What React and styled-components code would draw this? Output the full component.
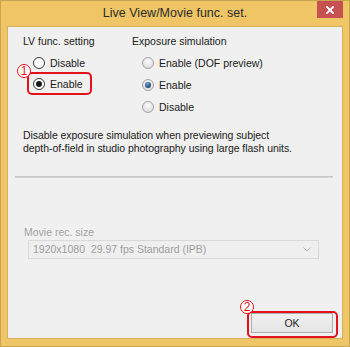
import React from 'react'
import styled, { createGlobalStyle } from 'styled-components'

const RED = '#e3131d';

const GlobalStyle = createGlobalStyle`
  html, body {
    margin: 0;
    padding: 0;
    background: #fff;
  }
  body {
    font-family: "Liberation Sans", Arial, sans-serif;
  }
  * {
    box-sizing: border-box;
  }
`;

export default function App() {
  return (
    <>
      <GlobalStyle />
      <Window>
        <TitleBar>
          <span />
          <Title>Live View/Movie func. set.</Title>
          <CloseButton>
            <svg width="8" height="8" viewBox="0 0 8 8">
              <path d="M1 1L7 7M7 1L1 7" stroke="#fff" strokeWidth="1.8" strokeLinecap="square" />
            </svg>
          </CloseButton>
        </TitleBar>

        <Client>
          <Settings>
            <Group $width={109}>
              <GroupLabel>LV func. setting</GroupLabel>
              <RadioList>
                <RadioRow>
                  <RadioDot $flat />
                  <RadioText>Disable</RadioText>
                </RadioRow>
                <RadioRow $shift={-1}>
                  <RadioDot $flat $checked />
                  <RadioText>Enable</RadioText>
                  <Highlight $l={4} $t={-1} $w={65} $h={23} />
                  <Marker $l={-6} $t={-9}>1</Marker>
                </RadioRow>
              </RadioList>
            </Group>

            <Group>
              <GroupLabel>Exposure simulation</GroupLabel>
              <RadioList>
                <RadioRow>
                  <RadioDot />
                  <RadioText>Enable (DOF preview)</RadioText>
                </RadioRow>
                <RadioRow>
                  <RadioDot $checked />
                  <RadioText>Enable</RadioText>
                </RadioRow>
                <RadioRow>
                  <RadioDot />
                  <RadioText>Disable</RadioText>
                </RadioRow>
              </RadioList>
            </Group>
          </Settings>

          <Note>
            Disable exposure simulation when previewing subject<br />
            depth-of-field in studio photography using large flash units.
          </Note>

          <Separator />

          <FieldLabel>Movie rec. size</FieldLabel>
          <Select>
            <span>1920x1080&nbsp;&nbsp;29.97 fps Standard (IPB)</span>
            <svg width="8" height="5" viewBox="0 0 8 5">
              <path d="M0.5 0.5L4 4L7.5 0.5" fill="none" stroke="#b9b9b9" strokeWidth="1" />
            </svg>
          </Select>

          <OkButton>
            OK
            <Highlight $l={-5} $t={-3} $w={91} $h={27} />
            <Marker $l={-12} $t={-14}>2</Marker>
          </OkButton>
        </Client>
      </Window>
    </>
  );
}

const Window = styled.div`
  width: 350px;
  height: 347px;
  display: flex;
  flex-direction: column;
  background: #efc565;
  border: 1px solid #c8a552;
  padding: 0 6px 7px 6px;
`;

const TitleBar = styled.div`
  height: 25px;
  margin: 0 -6px;
  display: grid;
  grid-template-columns: 1fr auto 1fr;
  align-items: center;
  flex: none;
`;

const Title = styled.div`
  font-size: 12.5px;
  line-height: 15px;
  color: #2b2b2b;
  white-space: nowrap;
`;

const CloseButton = styled.div`
  justify-self: end;
  align-self: start;
  margin-right: 6px;
  width: 26px;
  height: 17px;
  background: #c75050;
  display: grid;
  place-items: center;
`;

const Client = styled.div`
  flex: 1;
  display: flex;
  flex-direction: column;
  background: #f0f0f0;
  border: 1px solid #d4b15c;
  padding: 8px 9px 5px 7px;
  font-size: 10.5px;
  line-height: 13px;
  color: #1a1a1a;
`;

const Settings = styled.div`
  display: flex;
  margin-left: 8px;
`;

const Group = styled.div`
  width: ${p => (p.$width ? `${p.$width}px` : 'auto')};
  display: flex;
  flex-direction: column;
`;

const GroupLabel = styled.div`
  white-space: nowrap;
`;

const RadioList = styled.div`
  margin-top: 4px;
  display: flex;
  flex-direction: column;
`;

const RadioRow = styled.div`
  position: relative;
  height: 22px;
  display: flex;
  align-items: center;
  gap: 5px;
  padding-left: 10px;
  margin-top: ${p => (p.$shift ? `${p.$shift}px` : '0')};
  white-space: nowrap;
`;

const RadioDot = styled.span`
  width: 12px;
  height: 12px;
  flex: none;
  border-radius: 50%;
  display: grid;
  place-items: center;
  border: 1px solid ${p => (p.$flat ? '#3a3a3a' : '#a3a3a3')};
  background: ${p =>
    p.$flat ? '#fff' : 'radial-gradient(circle at 50% 35%, #fbfbfb 0%, #e4e4e4 60%, #d2d2d2 100%)'};

  &::after {
    content: '';
    display: ${p => (p.$checked ? 'block' : 'none')};
    width: 6px;
    height: 6px;
    border-radius: 50%;
    background: ${p =>
      p.$flat ? '#1a1a1a' : 'radial-gradient(circle at 40% 35%, #7fa6d6 0%, #2a548e 55%, #152f57 100%)'};
  }
`;

const RadioText = styled.span``;

const Highlight = styled.span`
  position: absolute;
  left: ${p => p.$l}px;
  top: ${p => p.$t}px;
  width: ${p => p.$w}px;
  height: ${p => p.$h}px;
  border: 2px solid ${RED};
  border-radius: 5px;
  pointer-events: none;
`;

const Marker = styled.span`
  position: absolute;
  left: ${p => p.$l}px;
  top: ${p => p.$t}px;
  width: 14px;
  height: 14px;
  border-radius: 50%;
  border: 1px solid ${RED};
  background: #fff;
  color: ${RED};
  font-size: 12px;
  line-height: 12px;
  text-align: center;
`;

const Note = styled.div`
  margin: 11px 0 0 8px;
  letter-spacing: -0.05px;
  white-space: nowrap;
`;

const Separator = styled.div`
  margin-top: 21px;
  height: 2px;
  background: #c9c9c9;
  border-bottom: 1px solid #d6d6d6;
`;

const FieldLabel = styled.div`
  margin: 48px 0 0 9px;
  color: #a3a3a3;
`;

const Select = styled.div`
  margin: 1px 0 0 13px;
  width: 291px;
  height: 19px;
  border: 1px solid #d9d9d9;
  background: #efefef;
  color: #9e9e9e;
  display: flex;
  align-items: center;
  justify-content: space-between;
  padding: 0 7px 0 4px;
  white-space: nowrap;
`;

const OkButton = styled.div`
  position: relative;
  margin-top: auto;
  align-self: flex-end;
  width: 82px;
  height: 20px;
  border: 1px solid #acacac;
  background: linear-gradient(#f0f0f0, #e5e5e5);
  display: grid;
  place-items: center;
  color: #1e1e1e;
`;
